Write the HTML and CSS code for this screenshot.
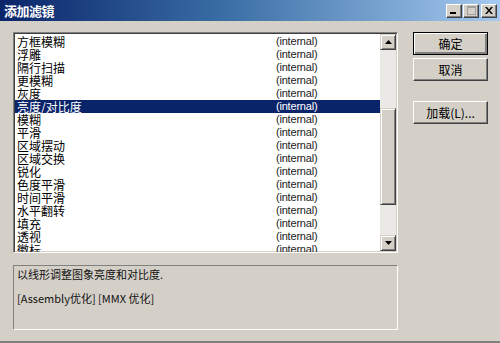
FILE: index.html
```html
<!DOCTYPE html>
<html lang="zh">
  <head>
    <meta charset="UTF-8" />
    <title>添加滤镜</title>
    <link rel="stylesheet" href="styles.css">
  </head>
  <body>
    <div class="dialog">
      <!-- Title bar -->
      <div class="titlebar">
        <span class="title">添加滤镜</span>
        <div class="caption">
          <span class="cap-btn">
            <svg width="8" height="7" viewBox="0 0 8 7"><rect x="0" y="5" width="6" height="2" fill="#000"/></svg>
          </span>
          <span class="cap-btn">
            <svg width="9" height="9" viewBox="0 0 9 9"><rect x="0.5" y="0.5" width="8" height="8" fill="none" stroke="#a0a0a0"/><rect x="0" y="0" width="9" height="2" fill="#a0a0a0"/></svg>
          </span>
          <span class="cap-btn close">
            <svg width="8" height="7" viewBox="0 0 8 7"><path d="M0 0h2l2 2.5 2-2.5h2l-3 3.5 3 3.5h-2l-2-2.5-2 2.5h-2l3-3.5z" fill="#000"/></svg>
          </span>
        </div>
      </div>

      <div class="content">
        <div class="top">
          <!-- Filter list -->
          <div class="listbox">
            <div class="rows">
              <div class="row"><span class="name">方框模糊</span><span class="src">(internal)</span></div>
              <div class="row"><span class="name">浮雕</span><span class="src">(internal)</span></div>
              <div class="row"><span class="name">隔行扫描</span><span class="src">(internal)</span></div>
              <div class="row"><span class="name">更模糊</span><span class="src">(internal)</span></div>
              <div class="row"><span class="name">灰度</span><span class="src">(internal)</span></div>
              <div class="row selected"><span class="name">亮度/对比度</span><span class="src">(internal)</span></div>
              <div class="row"><span class="name">模糊</span><span class="src">(internal)</span></div>
              <div class="row"><span class="name">平滑</span><span class="src">(internal)</span></div>
              <div class="row"><span class="name">区域摆动</span><span class="src">(internal)</span></div>
              <div class="row"><span class="name">区域交换</span><span class="src">(internal)</span></div>
              <div class="row"><span class="name">锐化</span><span class="src">(internal)</span></div>
              <div class="row"><span class="name">色度平滑</span><span class="src">(internal)</span></div>
              <div class="row"><span class="name">时间平滑</span><span class="src">(internal)</span></div>
              <div class="row"><span class="name">水平翻转</span><span class="src">(internal)</span></div>
              <div class="row"><span class="name">填充</span><span class="src">(internal)</span></div>
              <div class="row"><span class="name">透视</span><span class="src">(internal)</span></div>
              <div class="row"><span class="name">徽标</span><span class="src">(internal)</span></div>
            </div>
            <div class="scrollbar">
              <div class="sb-btn">
                <svg width="7" height="4" viewBox="0 0 7 4"><path d="M3.5 0L7 4H0z" fill="#000"/></svg>
              </div>
              <div class="track">
                <div class="thumb"></div>
              </div>
              <div class="sb-btn">
                <svg width="7" height="4" viewBox="0 0 7 4"><path d="M0 0h7L3.5 4z" fill="#000"/></svg>
              </div>
            </div>
          </div>

          <!-- Buttons -->
          <div class="buttons">
            <button class="btn default">确定</button>
            <button class="btn">取消</button>
            <button class="btn load">加载(L)...</button>
          </div>
        </div>

        <!-- Description -->
        <div class="desc">
          <p>以线形调整图象亮度和对比度.</p>
          <p>[Assembly优化] [MMX 优化]</p>
        </div>
      </div>
    </div>
  </body>
</html>
```

FILE: styles.css
```css
/* Page */
body {
  margin: 0;
  background: #d4d0c8;
  font-family: "Liberation Sans", "Noto Sans CJK SC", sans-serif;
  font-size: 12px;
  color: #000;
}

/* Window frame */
.dialog {
  width: 500px;
  height: 343px;
  box-sizing: border-box;
  background: #d4d0c8;
  border-bottom: 2px solid #808080;
  display: flex;
  flex-direction: column;
}

/* Title bar */
.titlebar {
  height: 21px;
  display: flex;
  align-items: center;
  justify-content: space-between;
  padding: 0 3px 0 4px;
  background: linear-gradient(90deg, #0a246a 0%, #3a6ea5 45%, #a6caf0 100%);
}
.title {
  color: #fff;
  font-family: "Noto Sans CJK SC", sans-serif;
  font-weight: bold;
  font-size: 13px;
  letter-spacing: -0.5px;
}
.caption {
  display: flex;
  gap: 1px;
}
.cap-btn {
  width: 16px;
  height: 14px;
  box-sizing: border-box;
  display: flex;
  align-items: center;
  justify-content: center;
  background: #d4d0c8;
  border: 1px solid;
  border-color: #fff #404040 #404040 #fff;
  box-shadow: inset -1px -1px 0 #808080;
}
.cap-btn.close {
  margin-left: 1px;
}

/* Content area */
.content {
  flex: 1;
  padding: 11px 12px 0 13px;
  display: flex;
  flex-direction: column;
}
.top {
  display: flex;
  gap: 15px;
}

/* List box */
.listbox {
  width: 385px;
  height: 221px;
  box-sizing: border-box;
  border: 1px solid;
  border-color: #808080 #fff #fff #808080;
  box-shadow: inset 1px 1px 0 #404040, inset -1px -1px 0 #d4d0c8;
  background: #fff;
  display: flex;
  padding: 1px;
  overflow: hidden;
}
.rows {
  flex: 1;
  padding-top: 1px;
}
.row {
  height: 13px;
  line-height: 13px;
  display: flex;
  padding-left: 2px;
  white-space: nowrap;
}
.row .name {
  width: 259px;
  font-family: "Noto Sans CJK SC", sans-serif;
  font-size: 12px;
}
.row .src {
  font-family: "Liberation Sans", sans-serif;
  font-size: 11px;
  letter-spacing: -0.2px;
  color: #222;
}
.row.selected {
  background: #0a246a;
  color: #fff;
}
.row.selected .src {
  color: #fff;
}

/* Scroll bar */
.scrollbar {
  width: 16px;
  display: flex;
  flex-direction: column;
}
.sb-btn {
  height: 16px;
  box-sizing: border-box;
  display: flex;
  align-items: center;
  justify-content: center;
  background: #d4d0c8;
  border: 1px solid;
  border-color: #d4d0c8 #404040 #404040 #d4d0c8;
  box-shadow: inset 1px 1px 0 #fff, inset -1px -1px 0 #808080;
}
.track {
  flex: 1;
  background: #ebe9e5;
}
.thumb {
  margin-top: 58px;
  height: 97px;
  box-sizing: border-box;
  background: #d4d0c8;
  border: 1px solid;
  border-color: #d4d0c8 #404040 #404040 #d4d0c8;
  box-shadow: inset 1px 1px 0 #fff, inset -1px -1px 0 #808080;
}

/* Push buttons */
.buttons {
  display: flex;
  flex-direction: column;
  gap: 3px;
}
.btn {
  width: 75px;
  height: 23px;
  box-sizing: border-box;
  background: #d4d0c8;
  font-family: "Noto Sans CJK SC", sans-serif;
  font-size: 12px;
  color: #000;
  padding: 0;
  border: 1px solid;
  border-color: #fff #404040 #404040 #fff;
  box-shadow: inset -1px -1px 0 #808080;
}
.btn.default {
  border: 1px solid #000;
  box-shadow: inset 1px 1px 0 #fff, inset -2px -2px 0 #808080;
}
.btn.load {
  margin-top: 17px;
}

/* Description box */
.desc {
  margin-top: 12px;
  width: 385px;
  height: 65px;
  box-sizing: border-box;
  border: 1px solid;
  border-color: #808080 #fff #fff #808080;
  padding: 1px 3px;
  font-family: "Noto Sans CJK SC", sans-serif;
  font-size: 11px;
  color: #111;
}
.desc p {
  margin: 0 0 9px;
  line-height: 15px;
}
```
